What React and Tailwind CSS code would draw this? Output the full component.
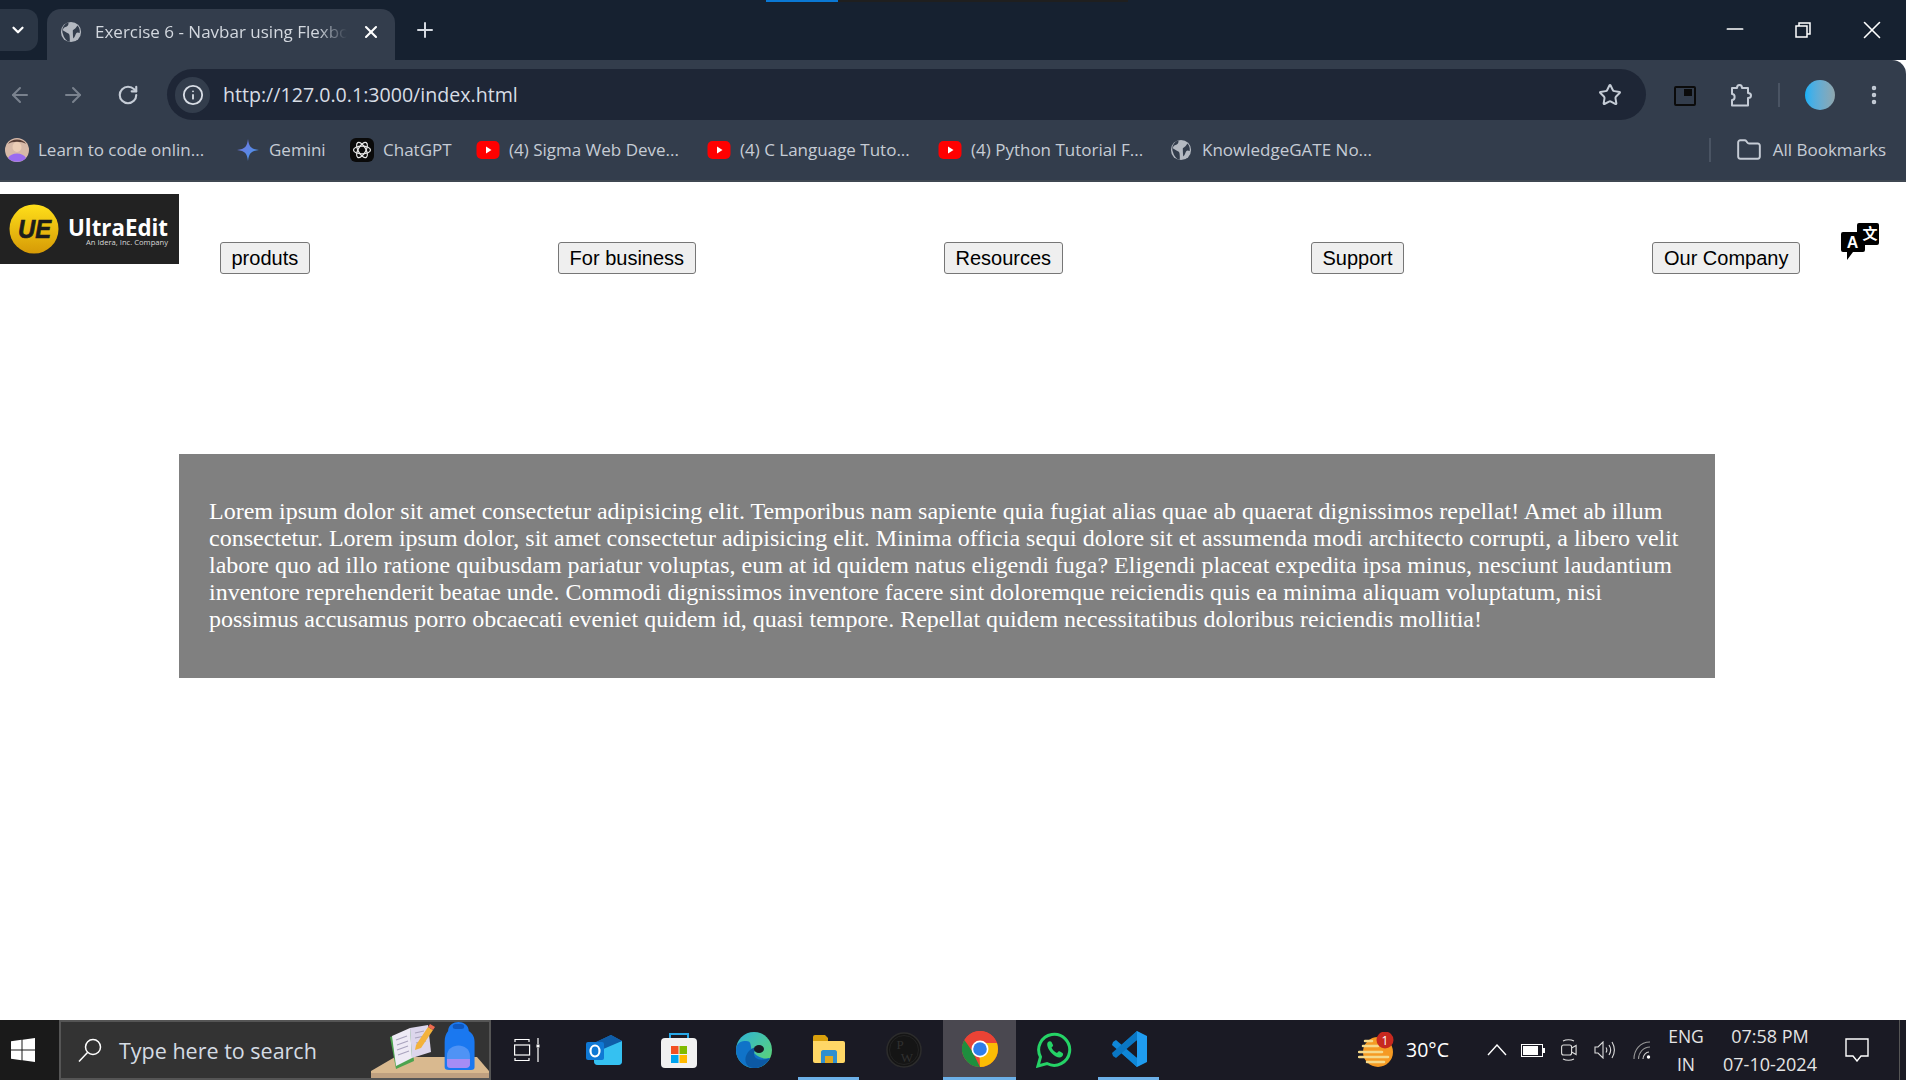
import React from "react";
import { ArrowLeft, ArrowRight, RotateCw, Info, Star, EllipsisVertical, Folder, X, Plus, ChevronDown, Minus } from "lucide-react";

const Globe = ({ size = 24, c = "#b4b9c1", d = "#333d4c" }) => (
  <svg width={size} height={size} viewBox="0 0 24 24">
    <circle cx="12" cy="12" r="11" fill={c} />
    <path d="M9 1.500C10 4 8 6 6 6.500S3 9 3 10l5 3c2 .5 2.500 2 2.500 3.500s.5 3 0 6l-3-1C5 19 4 17 3.500 15 2 12 2 8 4 5.500 5 3.500 7 2 9 1.500Z" fill={d} />
    <path d="M14 10c2-1 4-3 5-5 2 2 3 5 2.500 8-1.500-.5-3-1-4 .5s-1 4-3 5.500c-.5-3-.5-7-.5-9Z" fill={d} />
  </svg>
);

const YouTube = () => (
  <svg width="24" height="18" viewBox="0 0 24 18">
    <rect x="0.500" y="0" width="23" height="18" rx="5" fill="#f00" />
    <path d="M10 5.500v7l5.500-3.500Z" fill="#fff" />
  </svg>
);

const ChatGptIcon = () => (
  <svg width="24" height="24" viewBox="0 0 24 24">
    <rect x="0" y="0" width="24" height="24" rx="6" fill="#0a0a0a" />
    <g fill="none" stroke="#e8e8e8" strokeWidth="1.200">
      <ellipse cx="12" cy="12" rx="8.500" ry="3.800" />
      <ellipse cx="12" cy="12" rx="8.500" ry="3.800" transform="rotate(60 12 12)" />
      <ellipse cx="12" cy="12" rx="8.500" ry="3.800" transform="rotate(120 12 12)" />
    </g>
  </svg>
);

const GeminiIcon = () => (
  <svg width="22" height="22" viewBox="0 0 24 24">
    <defs>
      <linearGradient id="gem" x1="0" y1="0" x2="1" y2="1">
        <stop offset="0" stopColor="#7b6fe0" />
        <stop offset="1" stopColor="#3f9be8" />
      </linearGradient>
    </defs>
    <path d="M12 0C13 8 15 11 24 12 15 13 13 16 12 24 11 16 9 13 0 12 9 11 11 8 12 0Z" fill="url(#gem)" />
  </svg>
);

const AvatarIcon = () => (
  <svg width="24" height="24" viewBox="0 0 24 24">
    <circle cx="12" cy="12" r="12" fill="#d7b9a8" />
    <path d="M3 6C6 0 18 0 21 6 17 3 7 3 3 6Z" fill="#5a4038" />
    <ellipse cx="12" cy="9" rx="4.500" ry="5" fill="#eccdb6" />
    <path d="M3 20c3-6 15-6 18 0-4 5-14 5-18 0Z" fill="#9a6cf0" />
  </svg>
);

const Bookmark = ({ icon, w, children }) => (
  <div className="flex items-center gap-[9px] shrink-0">
    <span className="w-[24px] flex justify-center">{icon}</span>
    <span className="whitespace-nowrap overflow-hidden" style={{ width: w }}>{children}</span>
  </div>
);

const Logo = () => (
  <svg width="179" height="70" viewBox="0 0 179 70" className="shrink-0">
    <defs>
      <linearGradient id="ue" x1="0" y1="0" x2="0" y2="1">
        <stop offset="0" stopColor="#ffdf1a" />
        <stop offset="1" stopColor="#d69a06" />
      </linearGradient>
    </defs>
    <rect width="179" height="70" fill="#222222" />
    <circle cx="34" cy="35" r="24.500" fill="url(#ue)" />
    <text x="18" y="44" textLength="33" lengthAdjust="spacingAndGlyphs" fontFamily="'Liberation Sans', sans-serif" fontWeight="700" fontStyle="italic" fontSize="26" fill="#1c1c1c" stroke="#1c1c1c" strokeWidth="0.700">UE</text>
    <text x="68" y="42" fontFamily="'Open Sans', sans-serif" fontWeight="700" fontSize="22.500" fill="#ffffff" textLength="100" lengthAdjust="spacingAndGlyphs">UltraEdit</text>
    <text x="86" y="51" fontFamily="'Open Sans', sans-serif" fontSize="7.500" fill="#d8d8d8" textLength="82" lengthAdjust="spacingAndGlyphs">An Idera, Inc. Company</text>
  </svg>
);

const NavButton = ({ children }) => (
  <button className="h-[32px] px-[10.500px] rounded-[3px] border border-[#767676] bg-[#efefef] text-black text-[20px] font-['Liberation_Sans',sans-serif] whitespace-nowrap leading-none">
    {children}
  </button>
);

const TranslateIcon = () => (
  <svg width="38" height="37" viewBox="0 0 38 37" className="shrink-0 mt-[41px] ml-[41px] mr-[27px]">
    <path d="M16 2a2 2 0 0 1 2-2h18a2 2 0 0 1 2 2v18a2 2 0 0 1-2 2H22V10h-6Z" fill="#000" />
    <path d="M2 9h20a2 2 0 0 1 2 2v16a2 2 0 0 1-2 2H12l-6 8v-8H2a2 2 0 0 1-2-2V11a2 2 0 0 1 2-2Z" fill="#000" />
    <text x="29" y="16" textAnchor="middle" fontSize="15" fontWeight="700" fill="#fff" fontFamily="'Noto Sans CJK SC', sans-serif">文</text>
    <text x="11.500" y="25" textAnchor="middle" fontSize="16" fontWeight="700" fill="#fff" fontFamily="'Liberation Sans', sans-serif">A</text>
  </svg>
);

const Slot = ({ active, bar, children }) => (
  <div className="w-[75px] h-full flex justify-center shrink-0">
    <div className={
      active
        ? "w-[73px] h-full ml-[2px] flex items-center justify-center bg-[#4a4850] border-b-[3px] border-[#6cb0e8]"
        : bar
          ? "w-[61px] h-full flex items-center justify-center border-b-[3px] border-[#6cb0e8]"
          : "w-[61px] h-full flex items-center justify-center"
    }>
      {children}
    </div>
  </div>
);

const SearchArt = () => (
  <svg width="118" height="58" viewBox="0 0 118 58" className="ml-auto shrink-0">
    <path d="M24 36H106L118 50V58H0V50Z" fill="#d9b98f" />
    <path d="M0 52H118V58H0Z" fill="#bfa080" />
    <path d="M19 16 40 9 43 40 25 48Z" fill="#4da34f" />
    <path d="M21 15 39 7 41 37 25 45Z" fill="#eeeaf5" />
    <path d="M39 7 57 4 60 31 41 37Z" fill="#dcd6ec" />
    <g stroke="#a9a3bd" strokeWidth="1.200">
      <path d="M25 19 36 15M26 24 37 20M26 29 37 25M27 34 38 30" />
      <path d="M44 12 53 10M44 17 54 15M45 22 55 20" />
    </g>
    <path d="M45 24 57 6l5 3-12 18-6 2Z" fill="#f3b23c" />
    <path d="M57 6l2-3 5 3-2 3Z" fill="#ee6a50" />
    <g transform="matrix(1.150 0 0 1 -8 0)">
      <path d="M74 10c0-6 5-9 9-9s9 3 9 9c4 3 5 7 5 11v25c0 3-2 3-5 3H75c-3 0-4-1-4-3V21c0-5 1-8 3-11Z" fill="#1a78f0" />
      <path d="M73 35c0-14 20-14 20 0v8c0 3-2 4-4 4H77c-3 0-4-1-4-4Z" fill="#4f93f5" />
      <path d="M73 38h20v5c0 3-2 4-4 4H77c-3 0-4-1-4-4Z" fill="#a58cf5" />
      <rect x="78" y="3" width="10" height="5" rx="2.500" fill="#0f58bf" />
    </g>
  </svg>
);

const Windows = () => (
  <svg width="24" height="24" viewBox="0 0 24 24">
    <path d="M0 3.300 10.500 1.800V11.400H0ZM11.500 1.700 24 0V11.400H11.500ZM0 12.500H10.500V22.200L0 20.700ZM11.500 12.500H24V24L11.500 22.300Z" fill="#fff" />
  </svg>
);

const TaskView = () => (
  <svg width="26" height="24" viewBox="0 0 26 24" fill="none" stroke="#fff" strokeWidth="1.200" className="-ml-[3px]">
    <path d="M1 4V1.500H15V4M1 20V22.500H15V20" />
    <rect x="0.600" y="7" width="15" height="10" />
    <path d="M24 0V6M24 10V24" />
    <rect x="22.500" y="6.500" width="3" height="3" fill="#fff" stroke="none" />
  </svg>
);

const Outlook = () => (
  <svg width="36" height="30" viewBox="0 0 36 30">
    <path d="M8 8 25 0 36 6V26a4 4 0 0 1-4 4H12a4 4 0 0 1-4-4Z" fill="#1a78c8" />
    <path d="M8 14 36 6V26a4 4 0 0 1-4 4H12a4 4 0 0 1-4-4Z" fill="#35c1f1" />
    <path d="M8 8 25 0 36 6 8 18Z" fill="#0f5da8" />
    <rect x="0" y="7" width="18" height="18" rx="2" fill="#0f78d4" />
    <ellipse cx="9" cy="16" rx="4.500" ry="5.500" fill="none" stroke="#fff" strokeWidth="2.200" />
  </svg>
);

const Store = () => (
  <svg width="36" height="36" viewBox="0 0 36 36">
    <path d="M9 9V2h18v7" fill="none" stroke="#27a8e8" strokeWidth="2" />
    <rect x="0" y="6" width="36" height="30" rx="4" fill="#f1f1f1" />
    <rect x="10" y="14" width="7.500" height="8" fill="#f25022" />
    <rect x="18.500" y="14" width="7.500" height="8" fill="#7fba00" />
    <rect x="10" y="23" width="7.500" height="8" fill="#00a4ef" />
    <rect x="18.500" y="23" width="7.500" height="8" fill="#ffb900" />
  </svg>
);

const Edge = () => (
  <svg width="36" height="36" viewBox="0 0 36 36">
    <defs>
      <linearGradient id="edgeA" x1="0" y1="0" x2="1" y2="1">
        <stop offset="0" stopColor="#2db3d9" />
        <stop offset="1" stopColor="#62d76a" />
      </linearGradient>
    </defs>
    <circle cx="18" cy="18" r="18" fill="url(#edgeA)" />
    <path d="M18 36C8 36 0 28 0 18 0 10 6 9 10 9c6 0 4 5 6 9s8 10 18 8c-3 6-9 10-16 10Z" fill="#1073c8" />
    <path d="M18 36c-7 0-10-6-8-12s10-12 14-7c-3-1-6 1-6 5s5 8 16 4c-3 6-9 10-16 10Z" fill="#0c59a4" />
    <ellipse cx="23" cy="17" rx="5" ry="4" fill="#1a1a24" />
  </svg>
);

const Explorer = () => (
  <svg width="32" height="28" viewBox="0 0 32 28">
    <path d="M0 2a2 2 0 0 1 2-2h10l3 3h0v4H0Z" fill="#d9a00c" />
    <path d="M0 6h30a2 2 0 0 1 2 2v18a2 2 0 0 1-2 2H2a2 2 0 0 1-2-2Z" fill="#ffd766" />
    <path d="M8 28V17c0-1 1-2 2-2h12c1 0 2 1 2 2v11h-4v-7h-8v7Z" fill="#2f8fd0" />
    <rect x="12" y="21" width="8" height="7" fill="#e0a820" />
  </svg>
);

const PW = () => (
  <svg width="36" height="36" viewBox="0 0 36 36">
    <circle cx="18" cy="18" r="17" fill="#151515" stroke="#2c2c2c" strokeWidth="1.500" />
    <circle cx="18" cy="18" r="14.500" fill="none" stroke="#262626" strokeWidth="0.800" />
    <text x="14" y="17" textAnchor="middle" fontSize="13" fill="#303030" fontFamily="'Liberation Serif', serif">P</text>
    <text x="21" y="30" textAnchor="middle" fontSize="13" fill="#303030" fontFamily="'Liberation Serif', serif">W</text>
  </svg>
);

const Chrome = () => (
  <svg width="36" height="36" viewBox="0 0 36 36">
    <circle cx="18" cy="18" r="18" fill="#ea4335" />
    <path d="M18 36A18 18 0 0 1 2.400 9L10 20l8 16Z" fill="#1e8e3e" />
    <path d="M18 36c10 0 18-8 18-18 0-2-.5-4-1-6H18l-.5 12Z" fill="#fbbc04" />
    <path d="M2.400 9A18 18 0 0 1 35 12H18c-4 0-6 2-7.500 5Z" fill="#ea4335" />
    <circle cx="18" cy="18" r="8.500" fill="#fff" />
    <circle cx="18" cy="18" r="6.800" fill="#2f7de9" />
  </svg>
);

const WhatsApp = () => (
  <svg width="36" height="36" viewBox="0 0 36 36">
    <path d="M2 34 4.500 25A15.500 15.500 0 1 1 11 31.500Z" fill="none" stroke="#25d366" strokeWidth="3" />
    <path d="M12 10c1-1 3-1 3.500 0l1.500 3c.3.700 0 1.200-1.500 2.500 1 2.500 3 4.500 5.500 5.500 1.500-2 2-2 3-1.500l2.500 1.500c1 .7.500 2.500-.5 3.500-2 2-6 1-10-3S10 12 12 10Z" fill="#25d366" />
  </svg>
);

const VSCode = () => (
  <svg width="36" height="36" viewBox="0 0 36 36">
    <path d="M26 0 36 5V31L26 36 11 20Z" fill="#1f9cf0" />
    <path d="M26 0V36L6 18Z" fill="#0b7fcc" opacity="0.900" />
    <path d="M26 9 12 18 26 27Z" fill="#1a1a24" />
    <path d="M2 11 5 9 26 27V36L1 14Z" fill="#0f87d8" />
    <path d="M2 25 5 27 26 9V0L1 22Z" fill="#0a77c4" />
  </svg>
);

const Weather = () => (
  <svg width="36" height="36" viewBox="0 0 36 36">
    <circle cx="20" cy="20" r="15" fill="#f59a23" />
    <g stroke="#f5d98a" strokeWidth="2.500" strokeLinecap="round">
      <path d="M7 9H14M5 14H20M1 20H24M1 25H30M9 30H26" />
    </g>
    <circle cx="27" cy="8" r="8.500" fill="#c7291f" />
    <text x="27" y="12.500" textAnchor="middle" fontSize="12" fill="#fff" fontFamily="'Open Sans', sans-serif">1</text>
  </svg>
);

const Battery = () => (
  <svg width="24" height="13" viewBox="0 0 24 13">
    <rect x="0.500" y="0.500" width="21" height="12" fill="none" stroke="#fff" />
    <rect x="2" y="2" width="15" height="9" fill="#fff" />
    <rect x="22" y="4" width="2" height="5" fill="#fff" />
  </svg>
);

const Meet = () => (
  <svg width="16" height="22" viewBox="0 0 16 22" fill="none" stroke="#ddd" strokeWidth="1.100">
    <rect x="0.600" y="6" width="10" height="10" rx="2" />
    <path d="M10.600 9l4.500-2.500v9L10.600 13" />
    <path d="M2 2c3-1.500 8-1.500 11 0M2 20c3 1.500 8 1.500 11 0" />
  </svg>
);

const Volume = () => (
  <svg width="22" height="18" viewBox="0 0 22 18" fill="none" stroke="#ddd" strokeWidth="1.100">
    <path d="M1 6V12H4L9 17V1L4 6Z" />
    <path d="M12 6.500c1 1.500 1 3.500 0 5M15 4c2 3 2 7 0 10M18 1c3 5 3 11 0 16" />
  </svg>
);

const Wifi = () => (
  <svg width="18" height="18" viewBox="0 0 18 18" fill="none" stroke="#999" strokeWidth="1.100">
    <path d="M1 18C1 9 7 1 17 1" />
    <path d="M5.500 18C5.500 12 10 6 17 6" />
    <path d="M10 18C10 14.500 13 11 16 11" stroke="#ccc" />
    <circle cx="15.500" cy="16" r="1.700" fill="#fff" stroke="none" />
  </svg>
);

const Puzzle = () => (
  <svg width="24" height="24" viewBox="0 0 24 24" fill="none" stroke="#c5ccd6" strokeWidth="2" strokeLinejoin="round">
    <path d="M3 5H8C8 1 13 1 13 5H19V10C23 10 23 15 19 15V22.500H3V17C6.500 17 6.500 11 3 11Z" />
  </svg>
);

const LOREM = "Lorem ipsum dolor sit amet consectetur adipisicing elit. Temporibus nam sapiente quia fugiat alias quae ab quaerat dignissimos repellat! Amet ab illum consectetur. Lorem ipsum dolor, sit amet consectetur adipisicing elit. Minima officia sequi dolore sit et assumenda modi architecto corrupti, a libero velit labore quo ad illo ratione quibusdam pariatur voluptas, eum at id quidem natus eligendi fuga? Eligendi placeat expedita ipsa minus, nesciunt laudantium inventore reprehenderit beatae unde. Commodi dignissimos inventore facere sint doloremque reiciendis quis ea minima aliquam voluptatum, nisi possimus accusamus porro obcaecati eveniet quidem id, quasi tempore. Repellat quidem necessitatibus doloribus reiciendis mollitia!";

export default function App() {
  return (
    <div className="w-[1906px] h-[1080px] overflow-hidden flex flex-col bg-white font-['Open_Sans',sans-serif]">
      {/* Tab strip */}
      <div className="relative h-[60px] shrink-0 bg-[#162130] flex items-start pt-[9px]">
        <div className="absolute top-0 left-[766px] w-[72px] h-[2px] bg-[#0a78d4]" />
        <div className="absolute top-0 left-[838px] w-[290px] h-[2px] bg-[#1f1f1f]" />
        <div className="w-[38px] h-[42px] rounded-r-[12px] bg-[#2b3645] flex items-center justify-center text-white pr-[3px]">
          <ChevronDown size={18} strokeWidth={3} />
        </div>
        <div className="ml-[9px] w-[348px] h-[51px] rounded-t-[14px] bg-[#333d4c] flex items-center pl-[13px] pb-[6px]">
          <Globe size={22} />
          <span className="ml-[13px] w-[252px] overflow-hidden whitespace-nowrap text-[17px] text-[#d3d8df] [mask-image:linear-gradient(90deg,#000_88%,transparent)]">Exercise 6 - Navbar using Flexbox</span>
          <X size={20} strokeWidth={2.500} className="ml-[14px] text-white" />
        </div>
        <Plus size={24} strokeWidth={2} className="ml-[18px] mt-[9px] text-[#d5dae1]" />
        <div className="ml-auto flex items-start text-white">
          <Minus size={26} strokeWidth={1.600} className="mr-[47px] mt-[7px]" />
          <svg width="16" height="16" viewBox="0 0 16 16" fill="none" stroke="#fff" strokeWidth="1.500" className="mr-[46px] mt-[13px]">
            <rect x="1" y="4" width="11" height="11" />
            <path d="M4 4V1H15V12H12" />
          </svg>
          <X size={30} strokeWidth={1.300} className="mr-[19px] mt-[6px]" />
        </div>
      </div>

      {/* Toolbar */}
      <div className="h-[60px] shrink-0 bg-[#333d4c] flex items-start pt-[9px] rounded-tr-[14px]">
        <ArrowLeft size={24} strokeWidth={2} className="ml-[8px] mt-[14px] text-[#7a828e]" />
        <ArrowRight size={24} strokeWidth={2} className="ml-[29px] mt-[14px] text-[#7a828e]" />
        <RotateCw size={22} strokeWidth={2.300} className="ml-[32px] mt-[15px] text-[#c5ccd6]" />
        <div className="ml-[28px] w-[1479px] h-[51px] rounded-full bg-[#1e2636] flex items-center pl-[8px]">
          <div className="w-[35px] h-[36px] rounded-full bg-[#333d4c] flex items-center justify-center">
            <Info size={22} strokeWidth={2} className="text-[#d8dde5]" />
          </div>
          <span className="ml-[13px] text-[19.600px] text-[#d8dde5] whitespace-nowrap">http://127.0.0.1:3000/index.html</span>
          <Star size={24} strokeWidth={2} className="ml-auto mr-[24px] text-[#c5ccd6]" />
        </div>
        <div className="ml-[28px] mt-[17px] w-[22px] h-[20px] rounded-[2px] border-[2px] border-[#0b0b0b] flex justify-end pt-[1px] pr-[2px]">
          <div className="w-[8px] h-[7px] bg-[#0b0b0b]" />
        </div>
        <span className="ml-[33px] mt-[14px]"><Puzzle /></span>
        <div className="ml-[25px] mt-[14px] w-[2px] h-[24px] bg-[#4a5463]" />
        <div className="ml-[25px] mt-[11px] w-[30px] h-[30px] rounded-full bg-gradient-to-r from-[#0fb0f5] to-[#8fa6ad]" />
        <EllipsisVertical size={24} strokeWidth={2.500} className="ml-[27px] mt-[14px] text-[#c5ccd6]" />
      </div>

      {/* Bookmarks */}
      <div className="h-[62px] shrink-0 bg-[#333d4c] border-b-2 border-[#3f4751] flex items-center pl-[5px] text-[17px] text-[#c6ccd5]">
        <div className="flex items-center gap-[23px]">
          <Bookmark icon={<AvatarIcon />} w="175px">Learn to code onlin...</Bookmark>
          <Bookmark icon={<GeminiIcon />} w="58px">Gemini</Bookmark>
          <Bookmark icon={<ChatGptIcon />} w="70px">ChatGPT</Bookmark>
          <Bookmark icon={<YouTube />} w="175px">(4) Sigma Web Deve...</Bookmark>
          <Bookmark icon={<YouTube />} w="175px">(4) C Language Tuto...</Bookmark>
          <Bookmark icon={<YouTube />} w="175px">(4) Python Tutorial F...</Bookmark>
          <Bookmark icon={<Globe size={22} />} w="175px">KnowledgeGATE No...</Bookmark>
        </div>
        <div className="ml-auto w-[2px] h-[24px] bg-[#4a5463]" />
        <Folder size={26} strokeWidth={1.800} className="ml-[25px] text-[#c6ccd5]" />
        <span className="ml-[11px] mr-[20px] whitespace-nowrap">All Bookmarks</span>
      </div>

      {/* Page */}
      <div className="flex-1 min-h-0 bg-white">
        <nav className="flex items-start pt-[12px]">
          <Logo />
          <ul className="flex-1 flex justify-between ml-[41px] mt-[48px]">
            <li><NavButton>produts</NavButton></li>
            <li><NavButton>For business</NavButton></li>
            <li><NavButton>Resources</NavButton></li>
            <li><NavButton>Support</NavButton></li>
            <li><NavButton>Our Company</NavButton></li>
          </ul>
          <div className="-mt-[12px]"><TranslateIcon /></div>
        </nav>
        <div className="ml-[179px] mt-[180px] w-[1536px] h-[224px] bg-[#808080] px-[30px] pt-[44px]">
          <p className="text-white text-[24px] leading-[27px] font-['Liberation_Serif',serif]">{LOREM}</p>
        </div>
      </div>

      {/* Taskbar */}
      <div className="h-[60px] shrink-0 bg-[#1a1a24] flex items-stretch text-white">
        <div className="w-[59px] bg-[#1a1a1a] flex items-center pl-[11px] shrink-0"><Windows /></div>
        <div className="w-[432px] shrink-0 bg-[#333333] border-2 border-[#555555] flex items-center pl-[17px] overflow-hidden">
          <svg width="24" height="24" viewBox="0 0 24 24" fill="none" stroke="#fff" strokeWidth="1.500">
            <circle cx="15" cy="9" r="7.500" />
            <path d="M9.500 14.500 1 23.500" />
          </svg>
          <span className="ml-[17px] mt-[2px] text-[21.500px] text-[#d5dce4] whitespace-nowrap">Type here to search</span>
          <SearchArt />
        </div>
        <Slot><TaskView /></Slot>
        <Slot><Outlook /></Slot>
        <Slot><Store /></Slot>
        <Slot><Edge /></Slot>
        <Slot bar><Explorer /></Slot>
        <Slot><PW /></Slot>
        <Slot active><Chrome /></Slot>
        <Slot><WhatsApp /></Slot>
        <Slot bar><VSCode /></Slot>
        <div className="flex-1 flex items-center">
          <span className="ml-[192px]"><Weather /></span>
          <span className="ml-[12px] w-[43px] text-[19.500px] whitespace-nowrap">30°C</span>
          <svg width="20" height="12" viewBox="0 0 20 12" fill="none" stroke="#fff" strokeWidth="1.400" className="ml-[38px]"><path d="M1 11 10 1 19 11" /></svg>
          <span className="ml-[14px]"><Battery /></span>
          <span className="ml-[16px]"><Meet /></span>
          <span className="ml-[17px]"><Volume /></span>
          <span className="ml-[17px]"><Wifi /></span>
          <div className="ml-[15px] w-[40px] flex flex-col items-center text-[17.500px] leading-[28px] text-[#e5e5e5]">
            <span>ENG</span>
            <span>IN</span>
          </div>
          <div className="ml-[14px] w-[100px] flex flex-col items-center text-[18px] leading-[28px] text-[#e5e5e5]">
            <span className="whitespace-nowrap">07:58 PM</span>
            <span className="whitespace-nowrap">07-10-2024</span>
          </div>
          <svg width="24" height="24" viewBox="0 0 24 24" fill="none" stroke="#fff" strokeWidth="1.400" className="ml-[25px]"><path d="M1 1H23V18H16L12 23 8 18H1Z" /></svg>
          <div className="ml-[30px] w-px h-full bg-[#555555]" />
        </div>
      </div>
    </div>
  );
}
